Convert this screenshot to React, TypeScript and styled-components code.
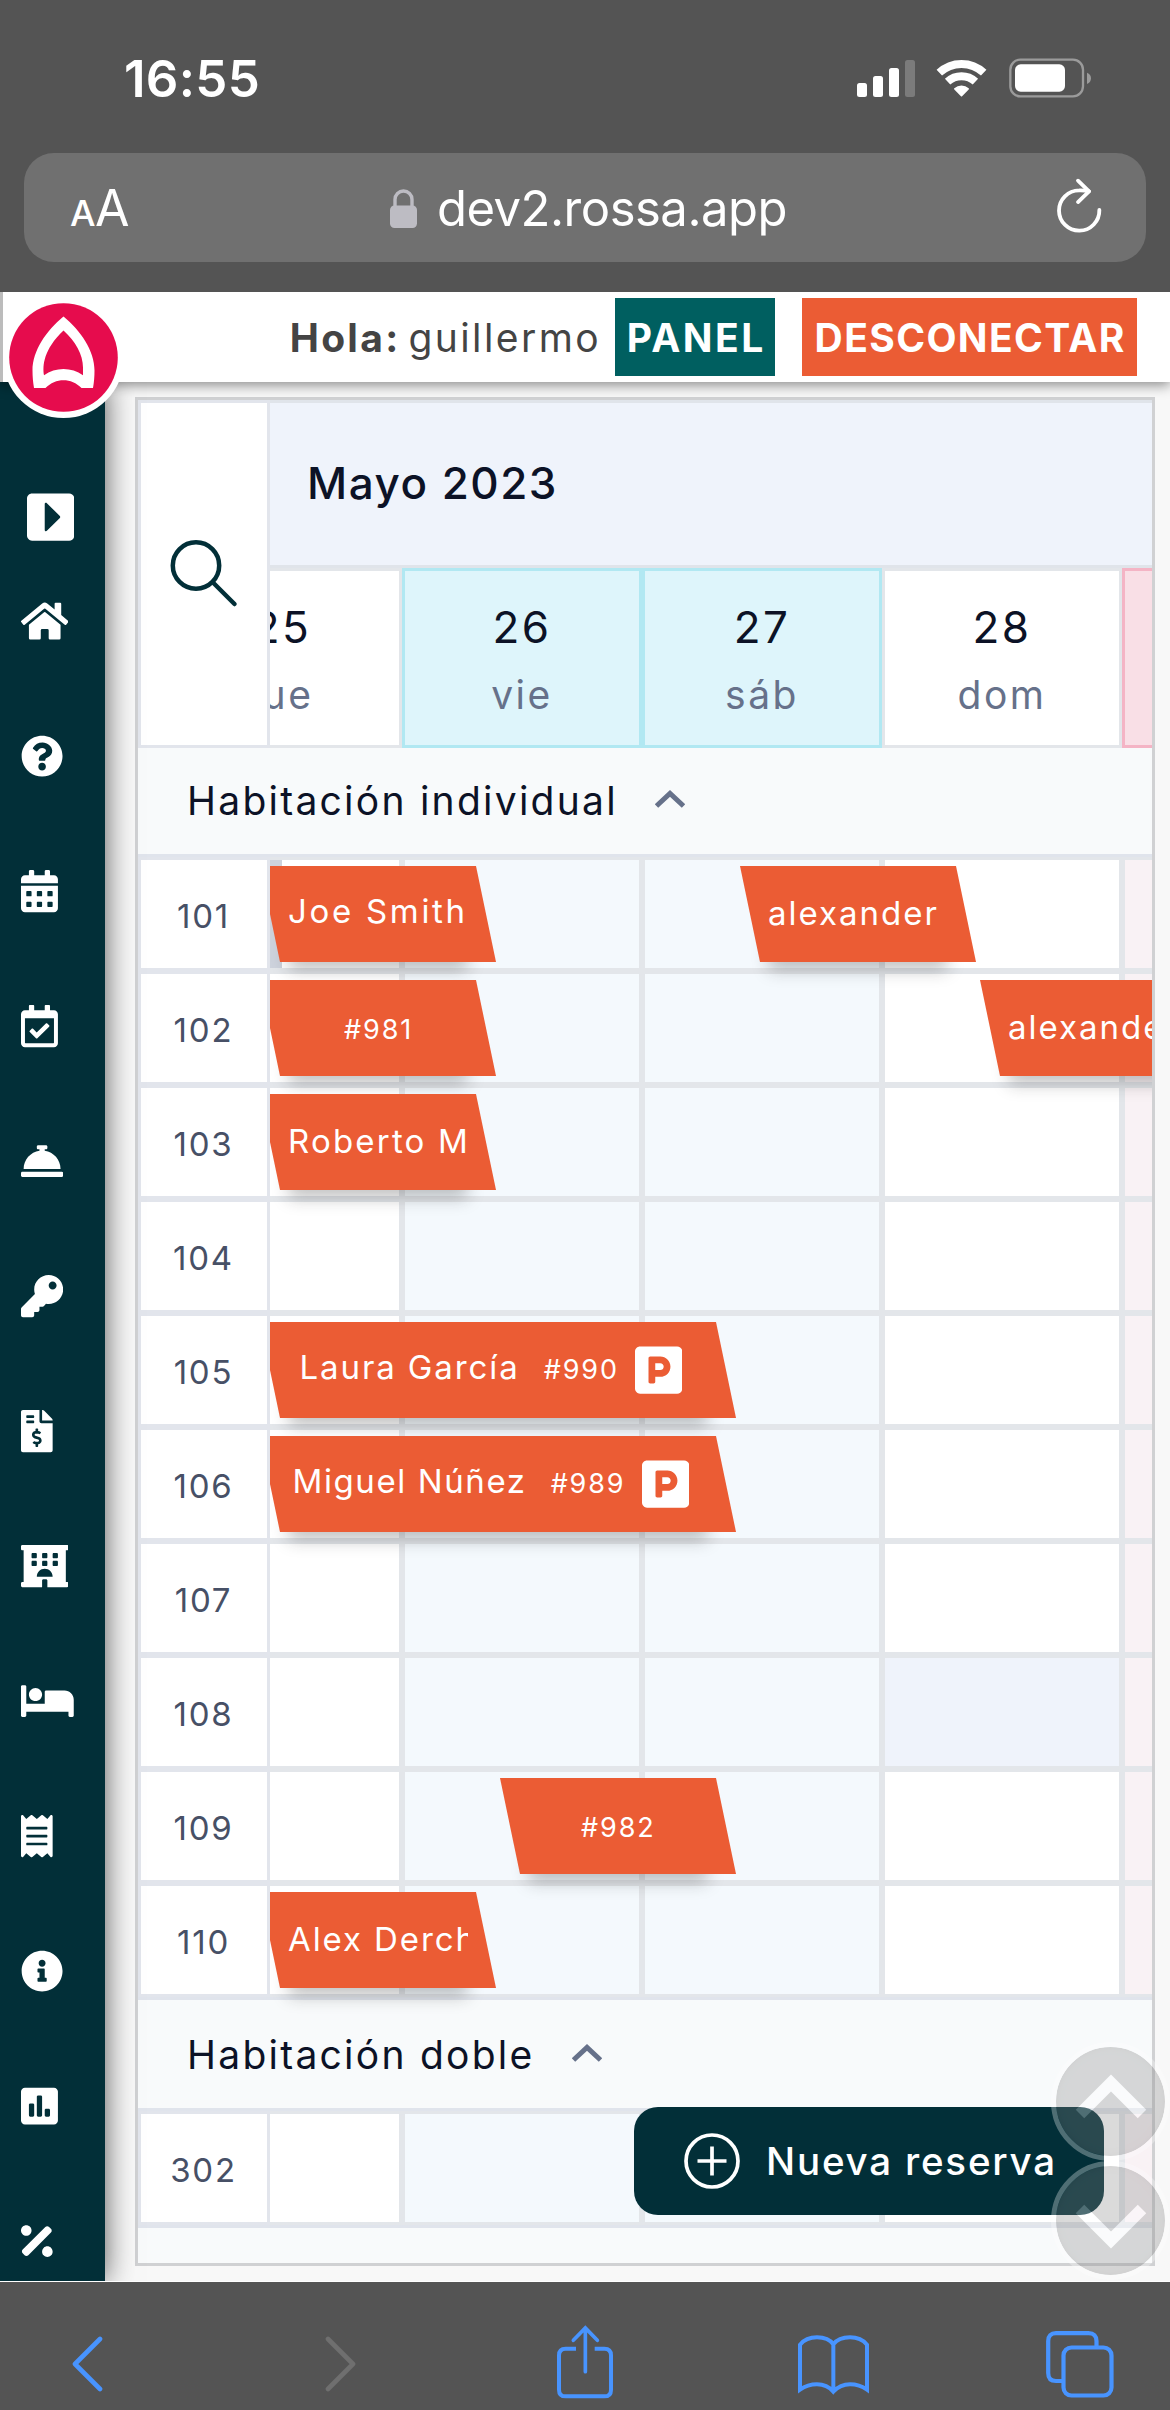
import React from 'react';
import styled, { createGlobalStyle, css } from 'styled-components';
import type { IconType } from 'react-icons';
import {
  FaBed,
  FaCalendarAlt,
  FaCaretSquareRight,
  FaConciergeBell,
  FaFileInvoiceDollar,
  FaHome,
  FaHotel,
  FaInfoCircle,
  FaKey,
  FaParking,
  FaPercentage,
  FaPoll,
  FaQuestionCircle,
  FaReceipt,
  FaRegCalendarCheck,
} from 'react-icons/fa';

const color = {
  chrome: '#545454',
  navy: '#022f38',
  teal: '#005f60',
  orange: '#eb5c34',
  pink: '#e60c4d',
  ink: '#0c1226',
  slate: '#475066',
  muted: '#66718a',
  line: '#e2e5ec',
  blue: '#4894ff',
};

const GlobalStyle = createGlobalStyle`
  * { box-sizing: border-box; }
  body { margin: 0; background: ${color.chrome}; }
`;

const Screen = styled.div`
  width: 1170px;
  height: 2410px;
  display: flex;
  flex-direction: column;
  overflow: hidden;
  background: ${color.chrome};
  font-family: Inter, 'Liberation Sans', sans-serif;
  white-space: nowrap;
`;

/* ---------- browser chrome ---------- */

const BrowserTop = styled.header`
  height: 292px;
  flex: none;
  color: #fff;
`;

const StatusBar = styled.div`
  height: 153px;
  padding: 4px 79px 0 124px;
  display: flex;
  align-items: center;
  justify-content: space-between;
`;

const Clock = styled.span`
  font-size: 51px;
  font-weight: 600;
  letter-spacing: 0.3px;
`;

const StatusIcons = styled.div`
  display: flex;
  align-items: flex-end;
  gap: 20px;
  margin-top: -2px;
`;

const SignalBars = styled.div`
  display: flex;
  align-items: flex-end;
  gap: 6px;
  padding-bottom: 1px;
`;

const SignalBar = styled.i<{ $height: number; $dim?: boolean }>`
  width: 10px;
  height: ${(p) => p.$height}px;
  border-radius: 2.5px;
  background: ${(p) => (p.$dim ? '#7b7b7b' : '#fff')};
`;

const AddressBar = styled.div`
  height: 109px;
  margin: 0 24px;
  padding: 0 43px 0 46px;
  display: grid;
  grid-template-columns: 1fr auto 1fr;
  align-items: center;
  border-radius: 30px;
  background: #707070;
`;

const TextSize = styled.span`
  font-size: 50px;
`;

const SmallLetter = styled.span`
  font-size: 36px;
  font-weight: 500;
  letter-spacing: -0.5px;
`;

const Address = styled.div`
  display: flex;
  align-items: center;
  gap: 20px;
  margin-left: 4px;
  padding-top: 1px;
  font-size: 49px;
  letter-spacing: -0.5px;
`;

const ReloadSlot = styled.div`
  display: flex;
  justify-content: flex-end;
  margin-top: -5px;
`;

const BrowserBottom = styled.footer`
  height: 128px;
  flex: none;
  padding-top: 36px;
  display: flex;
  justify-content: center;
  align-items: center;
`;

const BrowserButton = styled.div<{ $nudge?: number; $dim?: boolean }>`
  width: 248px;
  flex: none;
  display: flex;
  justify-content: center;
  padding-left: ${(p) => Math.max(0, (p.$nudge ?? 0) * 2)}px;
  padding-right: ${(p) => Math.max(0, -(p.$nudge ?? 0) * 2)}px;
  color: ${(p) => (p.$dim ? '#6f6f6f' : color.blue)};
`;

/* ---------- web page ---------- */

const Page = styled.div`
  position: relative;
  height: 1990px;
  flex: none;
  display: flex;
  flex-direction: column;
  overflow: hidden;
  background: #f8f8f8;
  border-bottom: 1px solid #fff;
`;

const TopBar = styled.div`
  position: relative;
  z-index: 3;
  height: 90px;
  flex: none;
  padding-right: 33px;
  display: flex;
  align-items: center;
  justify-content: flex-end;
  border-left: 3px solid #bcbcbc;
  background: #fff;
  box-shadow: 0 3px 12px rgba(0, 0, 0, 0.45);
  color: #444;
  font-size: 39px;
`;

const Greeting = styled.strong`
  font-weight: 700;
  letter-spacing: 2.3px;
  margin-right: 8px;
`;

const UserName = styled.span`
  letter-spacing: 2.4px;
  margin-right: 14px;
`;

const TopButton = styled.button<{ $tone: string; $width: number; $tracking: number }>`
  width: ${(p) => p.$width}px;
  height: 78px;
  padding: 0 0 0 ${(p) => p.$tracking}px;
  border: 0;
  background: ${(p) => p.$tone};
  color: #fff;
  font: 700 39px Inter, 'Liberation Sans', sans-serif;
  letter-spacing: ${(p) => p.$tracking}px;

  & + & {
    margin-left: 27px;
  }
`;

const LogoBadge = styled.div`
  position: absolute;
  left: 0;
  top: 5px;
  width: 121px;
  height: 121px;
`;

const Body = styled.div`
  flex: 1;
  min-height: 0;
  display: flex;
`;

const Sidebar = styled.nav`
  position: relative;
  z-index: 2;
  width: 105px;
  flex: none;
  padding-top: 97px;
  background: ${color.navy};
  box-shadow: 0 0 28px rgba(0, 0, 0, 0.65);
  color: #fff;
`;

/* $em is the glyph's width relative to its height. */
const SidebarItem = styled.a<{ $em: number; $large?: boolean }>`
  display: flex;
  align-items: center;
  height: ${(p) => (p.$large ? 75 : 135)}px;
  padding-left: ${(p) => (p.$large ? 27 : 21)}px;

  svg {
    height: ${(p) => (p.$large ? 54 : 42.2)}px;
    width: ${(p) => (p.$large ? 54 : 42.2) * p.$em}px;
  }
`;

const Main = styled.main`
  flex: 1;
  min-width: 0;
  padding: 15px 15px 15px 30px;
`;

const Planner = styled.section`
  height: 1869px;
  border: 3px solid #d0d1d3;
  overflow: hidden;
  background: #f8f9fb;
`;

const PlannerHead = styled.div`
  display: flex;
  height: 348px;
`;

const SearchCell = styled.div`
  width: 132px;
  flex: none;
  display: flex;
  align-items: center;
  justify-content: center;
  border: 3px solid ${color.line};
  background: #fff;
`;

const HeadTrack = styled.div`
  flex: 1;
  min-width: 0;
  overflow: hidden;
`;

const Month = styled.div`
  height: 168px;
  padding: 0 0 3px 37px;
  display: flex;
  align-items: center;
  border-top: 3px solid #e0e4ea;
  border-bottom: 3px solid #e0e4ea;
  background: #eff3fb;
  color: ${color.ink};
  font-size: 44px;
  font-weight: 500;
  letter-spacing: 1.5px;
`;

const dayColumns = css`
  display: grid;
  grid-template-columns: repeat(5, 240px);
  margin-left: -108px;
`;

const Days = styled.div`
  ${dayColumns}
  height: 180px;
`;

type Tone = 'plain' | 'free' | 'closed' | 'hover';

const headTone: Record<Tone, [string, string]> = {
  plain: ['#fff', '#e3e6ea'],
  free: ['#def5fb', '#b1e8f2'],
  closed: ['#f9dfe6', '#f4b4c5'],
  hover: ['#fff', '#e3e6ea'],
};

const cellTone: Record<Tone, string> = {
  plain: '#fff',
  free: '#f4f9fd',
  closed: '#f9f2f5',
  hover: '#eff3fb',
};

const Day = styled.div<{ $tone: Tone }>`
  padding-top: 31px;
  display: flex;
  flex-direction: column;
  align-items: center;
  gap: 18px;
  border: 3px solid ${(p) => headTone[p.$tone][1]};
  background: ${(p) => headTone[p.$tone][0]};
  line-height: 50px;
`;

const DayNumber = styled.span`
  color: ${color.ink};
  font-size: 44px;
  letter-spacing: 2.5px;
`;

const DayName = styled.span`
  color: ${color.muted};
  font-size: 39px;
  letter-spacing: 2.5px;
`;

const Group = styled.div<{ $first?: boolean }>`
  height: ${(p) => (p.$first ? 109 : 114)}px;
  padding: 0 0 ${(p) => (p.$first ? 2 : 0)}px 49px;
  display: flex;
  align-items: center;
  gap: 37px;
  border: solid #e0e4ec;
  border-width: ${(p) => (p.$first ? 0 : 3)}px 0 3px;
  background: #f8fafb;
  color: ${color.ink};
  font-size: 39px;
  letter-spacing: 2.25px;

  svg {
    margin-top: -3px;
  }
`;

const Row = styled.div`
  display: flex;
  height: 114px;
`;

const RoomCell = styled.div`
  width: 132px;
  flex: none;
  padding: 4px 1px 0 0;
  display: flex;
  align-items: center;
  justify-content: center;
  border: 3px solid ${color.line};
  background: #fff;
  color: ${color.slate};
  font-size: 33px;
  letter-spacing: 1.8px;
`;

const TrackClip = styled.div`
  flex: 1;
  min-width: 0;
  overflow-x: clip;
  overflow-y: visible;
`;

const Track = styled.div`
  ${dayColumns}
  height: 114px;
`;

const Cell = styled.div<{ $col: number; $tone: Tone }>`
  grid-row: 1;
  grid-column: ${(p) => p.$col};
  border: 3px solid #e3e6ea;
  background: ${(p) => cellTone[p.$tone]};
`;

const ArrivalMark = styled.div`
  grid-row: 1;
  grid-column: 1;
  width: 12px;
  margin: 3px 0 3px 108px;
  background: #cdd2dc;
`;

const BookingSlot = styled.div<{ $start: number; $nights: number }>`
  position: relative;
  z-index: 1;
  grid-row: 1;
  grid-column: ${(p) => p.$start} / span ${(p) => p.$nights + 1};
  height: 96px;
  margin: 9px 146px 9px 98px;
  display: flex;

  &::before {
    content: '';
    position: absolute;
    inset: 40px 30px 2px 30px;
    box-shadow: 0 9px 16px 1px rgba(30, 30, 30, 0.27);
  }
`;

const BookingShape = styled.div<{ $inset: number }>`
  position: relative;
  flex: 1;
  min-width: 0;
  padding: 0 28px 0 ${(p) => p.$inset}px;
  display: flex;
  align-items: center;
  background: ${color.orange};
  clip-path: polygon(0 0, calc(100% - 20px) 0, 100% 100%, 20px 100%);
  color: #fff;
`;

const BookingText = styled.div<{ $lift: number }>`
  display: flex;
  align-items: baseline;
  gap: 24px;
  overflow: hidden;
  padding-bottom: ${(p) => Math.max(0, p.$lift)}px;
  padding-top: ${(p) => Math.max(0, -p.$lift)}px;
`;

const Guest = styled.span<{ $tracking: number }>`
  font-size: 33px;
  letter-spacing: ${(p) => p.$tracking}px;
`;

const Code = styled.span`
  font-size: 27px;
  letter-spacing: 1.9px;
`;

const ParkingBadge = styled(FaParking)`
  flex: none;
  width: 47.25px;
  height: 54px;
  margin-left: 16px;
`;

const NewBooking = styled.button`
  position: absolute;
  z-index: 4;
  left: 634px;
  top: 1815px;
  width: 470px;
  height: 108px;
  padding: 0 0 0 50px;
  display: flex;
  align-items: center;
  gap: 26px;
  border: 0;
  border-radius: 24px;
  background: ${color.navy};
  color: #fff;
  font: 500 38.5px Inter, 'Liberation Sans', sans-serif;
  letter-spacing: 1.8px;
`;

const ScrollButtons = styled.div`
  position: absolute;
  z-index: 5;
  left: 1051px;
  top: 1750px;
  display: flex;
  flex-direction: column;
  opacity: 0.3;
`;

const ScrollButton = styled.div<{ $down?: boolean }>`
  width: 119px;
  height: 119px;
  display: flex;
  align-items: center;
  justify-content: center;
  padding: ${(p) => (p.$down ? '6px 0 0' : '0 0 6px')};
  border: 5px solid #fff;
  border-radius: 50%;
  background: #868686;
  background-clip: padding-box;
  box-shadow: inset 0 0 6px #707070;
`;

/* ---------- icons ---------- */

const WifiIcon = () => (
  <svg width="53" height="39" viewBox="284 54 160 117" fill="none" stroke="#fff">
    <path d="M297 95A98 98 0 0 1 431 95" strokeWidth="24" />
    <path d="M322 122A62 62 0 0 1 406 122" strokeWidth="24" />
    <path d="M344 144A30 30 0 0 1 384 144L364 164Z" fill="#fff" strokeWidth="5" strokeLinejoin="round" />
  </svg>
);

const BatteryIcon = () => (
  <svg width="83" height="40" viewBox="504 52 249 120" fill="none">
    <rect x="511" y="57" width="218" height="110" rx="30" stroke="#9b9b9b" strokeWidth="7" />
    <rect x="525" y="71" width="150" height="82" rx="17" fill="#fff" />
    <path d="M741 96Q753 101 753 113Q753 125 741 130Z" fill="#9b9b9b" />
  </svg>
);

const LockIcon = () => (
  <svg width="27" height="39" viewBox="0 0 27 39" fill="none">
    <path d="M5 18V10.5a8.5 8.5 0 0 1 17 0V18" stroke="#bdbcc3" strokeWidth="3.4" />
    <rect x="0" y="16.500" width="27" height="22.500" rx="4.500" fill="#bdbcc3" />
  </svg>
);

const ReloadIcon = () => (
  <svg width="46.700" height="56.700" viewBox="650 410 140 170" fill="none" stroke="#fff" strokeWidth="11.500" strokeLinecap="round" strokeLinejoin="round">
    <path d="M780 509A60.500 60.500 0 1 1 719.500 450Q735 449.500 749 453" />
    <path d="M716 421L749 453L716 485" />
  </svg>
);

const LogoIcon = () => (
  <svg width="121" height="121" viewBox="-60.500 -60.500 121 121">
    <circle r="60.500" fill="#fff" />
    <circle r="54.300" fill={color.pink} />
    <path
      fill="#fff"
      fillRule="evenodd"
      d="M0 -41C-17 -27 -31 -7 -31 13C-31 19 -30.500 25 -29.500 30.500H-18C-8 20 8 20 18 30.500H29.500C30.500 25 31 19 31 13C31 -7 17 -27 0 -41ZM0 -27C12 -16 19.500 -3 19.500 10V17.700C8 9.500 -8 9.500 -19.500 17.700C-21 8 -20 -8 0 -27Z"
    />
  </svg>
);

const SearchIcon = () => (
  <svg width="68" height="68" viewBox="0 0 68 68" fill="none" stroke={color.navy} strokeWidth="4.500" strokeLinecap="round">
    <circle cx="26" cy="25.500" r="23.200" />
    <path d="M43 42.500L64.500 64" />
  </svg>
);

const GroupCaret = () => (
  <svg width="30" height="18" viewBox="0 0 30 18" fill="none" stroke={color.muted} strokeWidth="5">
    <path d="M1.500 16L15 3.500L28.500 16" />
  </svg>
);

const PlusIcon = () => (
  <svg width="56" height="56" viewBox="0 0 56 56" fill="none" stroke="#fff" strokeWidth="3.700">
    <circle cx="28" cy="28" r="26" />
    <path d="M28 13.500V42.500M13.500 28H42.500" />
  </svg>
);

const ScrollArrow = ({ down }: { down?: boolean }) => (
  <svg width="72" height="50" viewBox="-1 0 72 50" fill="none" stroke="#fff" strokeWidth="12">
    {down ? <path d="M4 10L35 41L66 10" /> : <path d="M4 40L35 9L66 40" />}
  </svg>
);

const BackIcon = () => (
  <svg width="32" height="58" viewBox="0 0 32 58" fill="none" stroke="currentColor" strokeWidth="4.600" strokeLinecap="round" strokeLinejoin="round">
    <path d="M29 4L4 29L29 54" />
  </svg>
);

const ForwardIcon = () => (
  <svg width="32" height="58" viewBox="0 0 32 58" fill="none" stroke="currentColor" strokeWidth="4.600" strokeLinecap="round" strokeLinejoin="round">
    <path d="M3 4L28 29L3 54" />
  </svg>
);

const ShareIcon = () => (
  <svg width="60.700" height="76.700" viewBox="45 47 182 230" fill="none" stroke="currentColor" strokeWidth="12" overflow="visible">
    <path d="M108 115H77Q57 115 57 135V238Q57 258 77 258H193Q213 258 213 238V135Q213 115 193 115H164" />
    <path d="M136 55V184M100 90L136 53L172 90" strokeLinecap="round" strokeLinejoin="miter" strokeWidth="11" />
  </svg>
);

const BookIcon = () => (
  <svg width="75" height="61.700" viewBox="765 70 225 185" fill="none" stroke="currentColor" strokeWidth="12">
    <path d="M877 104Q862 83 828 83Q795 83 777 105V240Q800 224 828 224Q858 224 877 246Q898 224 927 224Q955 224 978 240V105Q960 83 927 83Q893 83 877 104V243" />
  </svg>
);

const TabsIcon = () => (
  <svg width="68" height="67" viewBox="0 0 68 67" fill="none" stroke="currentColor" strokeWidth="4.200">
    <rect x="17.500" y="16.500" width="48" height="48" rx="8" />
    <path d="M50.500 16V10Q50.500 2.200 42.500 2.200H10Q2.200 2.200 2.200 10V42Q2.200 50 10 50H17" />
  </svg>
);

/* ---------- data ---------- */

const menu: { Icon: IconType; em: number }[] = [
  { Icon: FaHome, em: 1.125 },
  { Icon: FaQuestionCircle, em: 1 },
  { Icon: FaCalendarAlt, em: 0.875 },
  { Icon: FaRegCalendarCheck, em: 0.875 },
  { Icon: FaConciergeBell, em: 1 },
  { Icon: FaKey, em: 1 },
  { Icon: FaFileInvoiceDollar, em: 0.75 },
  { Icon: FaHotel, em: 1.125 },
  { Icon: FaBed, em: 1.25 },
  { Icon: FaReceipt, em: 0.75 },
  { Icon: FaInfoCircle, em: 1 },
  { Icon: FaPoll, em: 0.875 },
  { Icon: FaPercentage, em: 0.75 },
];

const days: { id: string; number?: string; name?: string; tone: Tone }[] = [
  { id: 'd25', number: '25', name: 'jue', tone: 'plain' },
  { id: 'd26', number: '26', name: 'vie', tone: 'free' },
  { id: 'd27', number: '27', name: 'sáb', tone: 'free' },
  { id: 'd28', number: '28', name: 'dom', tone: 'plain' },
  { id: 'd29', tone: 'closed' },
];

interface Booking {
  start: number;
  nights: number;
  guest?: string;
  code?: string;
  parking?: boolean;
  inset: number;
  lift: number;
  tracking?: number;
}

interface Room {
  name: string;
  bookings?: Booking[];
  arrival?: boolean;
  hovered?: number;
}

const single: Room[] = [
  {
    name: '101',
    arrival: true,
    bookings: [
      { start: 1, nights: 1, guest: 'Joe Smith', inset: 28, lift: 6, tracking: 2.7 },
      { start: 3, nights: 1, guest: 'alexander', inset: 28, lift: 2, tracking: 2 },
    ],
  },
  {
    name: '102',
    bookings: [
      { start: 1, nights: 1, code: '#981', inset: 84, lift: -2 },
      { start: 4, nights: 1, guest: 'alexander', inset: 28, lift: 2, tracking: 2 },
    ],
  },
  { name: '103', bookings: [{ start: 1, nights: 1, guest: 'Roberto M', inset: 28, lift: 3, tracking: 2.2 }] },
  { name: '104' },
  {
    name: '105',
    bookings: [{ start: 1, nights: 2, guest: 'Laura García', code: '#990', parking: true, inset: 39.5, lift: 6, tracking: 1.9 }],
  },
  {
    name: '106',
    bookings: [{ start: 1, nights: 2, guest: 'Miguel Núñez', code: '#989', parking: true, inset: 32.5, lift: 6, tracking: 1.6 }],
  },
  { name: '107' },
  { name: '108', hovered: 3 },
  { name: '109', bookings: [{ start: 2, nights: 1, code: '#982', inset: 81, lift: -2 }] },
  { name: '110', bookings: [{ start: 1, nights: 1, guest: 'Alex Derch', inset: 28, lift: 3, tracking: 1.9 }] },
];

const double: Room[] = [{ name: '302' }];

/* ---------- parts ---------- */

const BookingBar = ({ booking: b }: { booking: Booking }) => (
  <BookingSlot $start={b.start} $nights={b.nights}>
    <BookingShape $inset={b.inset}>
      <BookingText $lift={b.lift}>
        {b.guest && <Guest $tracking={b.tracking ?? 2}>{b.guest}</Guest>}
        {b.code && <Code>{b.code}</Code>}
      </BookingText>
      {b.parking && <ParkingBadge />}
    </BookingShape>
  </BookingSlot>
);

const RoomRow = ({ room }: { room: Room }) => (
  <Row>
    <RoomCell>{room.name}</RoomCell>
    <TrackClip>
      <Track>
        {days.map((day, i) => (
          <Cell key={day.id} $col={i + 1} $tone={room.hovered === i ? 'hover' : day.tone} />
        ))}
        {room.arrival && <ArrivalMark />}
        {room.bookings?.map((b) => (
          <BookingBar key={b.start} booking={b} />
        ))}
      </Track>
    </TrackClip>
  </Row>
);

export default function App() {
  return (
    <Screen>
      <GlobalStyle />
      <BrowserTop>
        <StatusBar>
          <Clock>16:55</Clock>
          <StatusIcons>
            <SignalBars>
              <SignalBar $height={14} />
              <SignalBar $height={21} />
              <SignalBar $height={29} />
              <SignalBar $height={37} $dim />
            </SignalBars>
            <WifiIcon />
            <BatteryIcon />
          </StatusIcons>
        </StatusBar>
        <AddressBar>
          <TextSize>
            <SmallLetter>A</SmallLetter>A
          </TextSize>
          <Address>
            <LockIcon />
            dev2.rossa.app
          </Address>
          <ReloadSlot>
            <ReloadIcon />
          </ReloadSlot>
        </AddressBar>
      </BrowserTop>

      <Page>
        <TopBar>
          <LogoBadge>
            <LogoIcon />
          </LogoBadge>
          <Greeting>Hola:</Greeting>
          <UserName>guillermo</UserName>
          <TopButton $tone={color.teal} $width={160} $tracking={2.5}>
            PANEL
          </TopButton>
          <TopButton $tone={color.orange} $width={335} $tracking={1.4}>
            DESCONECTAR
          </TopButton>
        </TopBar>

        <Body>
          <Sidebar>
            <SidebarItem $em={0.875} $large>
              <FaCaretSquareRight />
            </SidebarItem>
            {menu.map(({ Icon, em }, i) => (
              <SidebarItem key={i} $em={em}>
                <Icon />
              </SidebarItem>
            ))}
          </Sidebar>

          <Main>
            <Planner>
              <PlannerHead>
                <SearchCell>
                  <SearchIcon />
                </SearchCell>
                <HeadTrack>
                  <Month>Mayo 2023</Month>
                  <Days>
                    {days.map((day) => (
                      <Day key={day.id} $tone={day.tone}>
                        {day.number && <DayNumber>{day.number}</DayNumber>}
                        {day.name && <DayName>{day.name}</DayName>}
                      </Day>
                    ))}
                  </Days>
                </HeadTrack>
              </PlannerHead>
              <Group $first>
                Habitación individual
                <GroupCaret />
              </Group>
              {single.map((room) => (
                <RoomRow key={room.name} room={room} />
              ))}
              <Group>
                Habitación doble
                <GroupCaret />
              </Group>
              {double.map((room) => (
                <RoomRow key={room.name} room={room} />
              ))}
              <Group />
            </Planner>
          </Main>
        </Body>

        <NewBooking>
          <PlusIcon />
          Nueva reserva
        </NewBooking>
        <ScrollButtons>
          <ScrollButton>
            <ScrollArrow />
          </ScrollButton>
          <ScrollButton $down>
            <ScrollArrow down />
          </ScrollButton>
        </ScrollButtons>
      </Page>

      <BrowserBottom>
        <BrowserButton $nudge={-2}>
          <BackIcon />
        </BrowserButton>
        <BrowserButton $nudge={4} $dim>
          <ForwardIcon />
        </BrowserButton>
        <BrowserButton>
          <ShareIcon />
        </BrowserButton>
        <BrowserButton>
          <BookIcon />
        </BrowserButton>
        <BrowserButton $nudge={-1}>
          <TabsIcon />
        </BrowserButton>
      </BrowserBottom>
    </Screen>
  );
}
